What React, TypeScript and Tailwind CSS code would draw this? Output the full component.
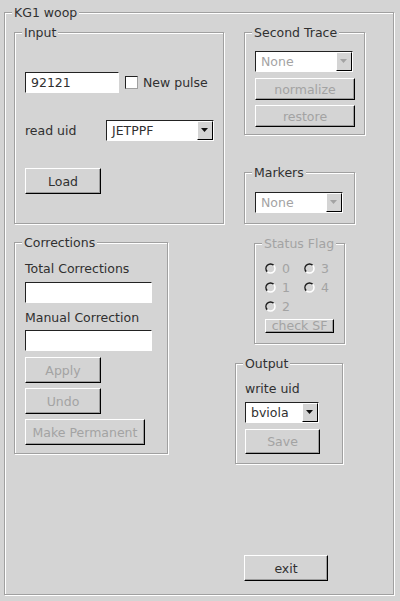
import type { ReactNode } from "react";

const dim = "text-[#a3a3a3]";

const Frame = ({
  label,
  disabled,
  className,
  children,
}: {
  label: string;
  disabled?: boolean;
  className?: string;
  children?: ReactNode;
}) => (
  <div
    className={`relative shrink-0 border border-[#a0a0a0] shadow-[1px_1px_0_#fff,inset_1px_1px_0_#fff] ${className ?? ""}`}
  >
    <span
      className={`absolute -top-[8px] left-[7px] px-[2px] leading-[15px] whitespace-nowrap bg-[#d4d4d4] ${disabled ? dim : ""}`}
    >
      {label}
    </span>
    {children}
  </div>
);

const Entry = ({ value, className }: { value?: string; className?: string }) => (
  <div
    className={`h-[21px] flex items-center bg-white border border-t-[#222] border-l-[#222] border-r-white border-b-white pl-[5px] ${className ?? ""}`}
  >
    {value}
  </div>
);

const Button = ({
  children,
  disabled,
  className,
}: {
  children: ReactNode;
  disabled?: boolean;
  className?: string;
}) => (
  <div
    className={`flex items-center justify-center whitespace-nowrap border border-t-white border-l-white border-r-black border-b-black shadow-[inset_-1px_-1px_0_#9c9c9c] ${disabled ? dim : ""} ${className ?? ""}`}
  >
    {children}
  </div>
);

const Combo = ({
  value,
  disabled,
  className,
}: {
  value: string;
  disabled?: boolean;
  className?: string;
}) => (
  <div
    className={`h-[21px] flex bg-white border border-t-[#222] border-l-[#222] border-r-white border-b-white ${className ?? ""}`}
  >
    <span className={`flex-1 flex items-center pl-[5px] ${disabled ? dim : ""}`}>{value}</span>
    <span className="w-[16px] flex items-center justify-center bg-[#d4d4d4] border border-t-white border-l-white border-r-black border-b-black">
      <svg width="8" height="5" viewBox="0 0 8 5">
        <path d="M0 0 H7 L3.5 4 Z" fill={disabled ? "#a3a3a3" : "#111"} />
      </svg>
    </span>
  </div>
);

const Radio = ({ label }: { label: string }) => (
  <div className="h-[19px] flex items-center">
    <svg width="11" height="11" viewBox="0 0 11 11">
      <path d="M2.3 8.7 A4.5 4.5 0 0 1 8.7 2.3" fill="none" stroke="#1a1a1a" strokeWidth="1.5" />
      <path d="M8.7 2.3 A4.5 4.5 0 0 1 2.3 8.7" fill="none" stroke="#fff" strokeWidth="1.5" />
    </svg>
    <span className={`ml-[6px] ${dim}`}>{label}</span>
  </div>
);

export default function App() {
  return (
    <div className="w-[400px] h-[601px] bg-[#d4d4d4] pt-[12px] pl-[4px] font-['DejaVu_Sans',sans-serif] text-[12.5px] leading-[15px] text-[#303030]">
      <Frame label="KG1 woop" className="w-[390px] h-[583px]">
        <div className="flex">
          {/* left column */}
          <div className="flex flex-col ml-[9px] mt-[19px]">
            <Frame label="Input" className="w-[210px] h-[192px] pl-[10px] pt-[7px]">
              <div className="flex items-center mt-[32px]">
                <Entry value="92121" className="w-[94px]" />
                <span className="ml-[6px] w-[13px] h-[13px] bg-white border border-t-[#222] border-l-[#222] border-r-[#a0a0a0] border-b-[#a0a0a0]" />
                <span className="ml-[5px]">New pulse</span>
              </div>
              <div className="flex items-center mt-[27px]">
                <span className="w-[81px]">read uid</span>
                <Combo value="JETPPF" className="w-[108px]" />
              </div>
              <Button className="mt-[27px] w-[76px] h-[26px]">Load</Button>
            </Frame>

            <Frame label="Corrections" className="mt-[18px] w-[154px] h-[212px] pl-[10px] pt-[7px]">
              <div className="mt-[11px]">Total Corrections</div>
              <Entry className="mt-[6px] w-[127px]" />
              <div className="mt-[7px]">Manual Correction</div>
              <Entry className="mt-[5px] w-[127px]" />
              <Button disabled className="mt-[6px] w-[76px] h-[26px]">Apply</Button>
              <Button disabled className="mt-[5px] w-[76px] h-[26px]">Undo</Button>
              <Button disabled className="mt-[5px] w-[120px] h-[26px]">Make Permanent</Button>
            </Frame>
          </div>

          {/* right column */}
          <div className="flex flex-col items-start ml-[11px] mt-[19px]">
            <Frame label="Second Trace" className="ml-[9px] w-[121px] h-[103px] pl-[10px] pt-[7px]">
              <Combo disabled value="None" className="mt-[11px] w-[98px]" />
              <Button disabled className="mt-[6px] w-[100px] h-[22px]">normalize</Button>
              <Button disabled className="mt-[5px] w-[100px] h-[22px]">restore</Button>
            </Frame>

            <Frame label="Markers" className="mt-[37px] ml-[9px] w-[111px] h-[52px] pl-[10px] pt-[7px]">
              <Combo disabled value="None" className="mt-[12px] w-[88px]" />
            </Frame>

            <Frame label="Status Flag" disabled className="mt-[19px] ml-[19px] w-[91px] h-[101px] pl-[10px] pt-[7px]">
              <div className="mt-[8px] grid grid-cols-[39px_39px]">
                <Radio label="0" />
                <Radio label="3" />
                <Radio label="1" />
                <Radio label="4" />
                <Radio label="2" />
              </div>
              <Button disabled className="mt-[3px] w-[69px] h-[14px] leading-[12px]">check SF</Button>
            </Frame>

            <Frame label="Output" className="mt-[19px] w-[108px] h-[101px] pl-[9px] pt-[7px]">
              <div className="mt-[10px]">write uid</div>
              <Combo value="bviola" className="mt-[6px] w-[74px]" />
              <Button disabled className="mt-[6px] w-[75px] h-[25px]">Save</Button>
            </Frame>

            <Button className="mt-[91px] ml-[9px] w-[84px] h-[26px]">exit</Button>
          </div>
        </div>
      </Frame>
    </div>
  );
}
